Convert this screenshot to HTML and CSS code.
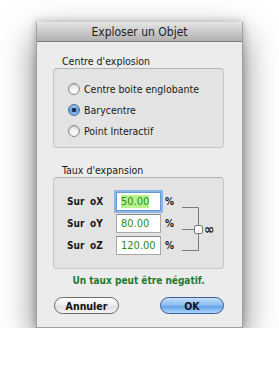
FILE: index.html
```html
<!DOCTYPE html>
<html lang="fr">
<head>
    <meta charset="UTF-8">
    <title>Exploser un Objet</title>
    <link rel="stylesheet" href="styles.css">
</head>
<body>
    <div class="window">
        <header class="titlebar">Exploser un Objet</header>
        <div class="content">
            <p class="group-label">Centre d'explosion</p>
            <div class="group group-radio">
                <label class="radio-row"><span class="radio"></span>Centre boite englobante</label>
                <label class="radio-row"><span class="radio radio-on"></span>Barycentre</label>
                <label class="radio-row"><span class="radio"></span>Point Interactif</label>
            </div>

            <p class="group-label group-label-2">Taux d'expansion</p>
            <div class="group group-rate">
                <div class="rate-rows">
                    <div class="rate-row">
                        <span class="rate-sur">Sur</span><span class="rate-axis">oX</span>
                        <span class="rate-input rate-focus"><span class="rate-sel">50.00</span></span>
                        <span class="rate-pct">%</span>
                    </div>
                    <div class="rate-row">
                        <span class="rate-sur">Sur</span><span class="rate-axis">oY</span>
                        <span class="rate-input">80.00</span>
                        <span class="rate-pct">%</span>
                    </div>
                    <div class="rate-row">
                        <span class="rate-sur">Sur</span><span class="rate-axis">oZ</span>
                        <span class="rate-input">120.00</span>
                        <span class="rate-pct">%</span>
                    </div>
                </div>
                <div class="link">
                    <svg width="26" height="66" viewBox="0 0 26 66">
                        <path d="M0 11.5H16.5V54.5H0M0 33.5H12" fill="none" stroke="#7a7a7a" stroke-width="1"/>
                        <rect x="12.5" y="29.5" width="8" height="8" rx="1.5" fill="#fafafa" stroke="#7a7a7a"/>
                    </svg>
                    <span class="link-inf">∞</span>
                </div>
            </div>

            <p class="hint">Un taux peut être négatif.</p>

            <div class="buttons">
                <button class="btn btn-cancel">Annuler</button>
                <button class="btn btn-ok">OK</button>
            </div>
        </div>
    </div>
</body>
</html>
```

FILE: styles.css
```css
* {
    margin: 0;
    padding: 0;
    box-sizing: border-box;
}
body {
    background-color: #fff;
    font-family: "DejaVu Sans Condensed", "DejaVu Sans", sans-serif;
    font-size: 10px;
    color: #1a1a1a;
}
.window {
    margin: 22px 0 0 36px;
    width: 207px;
    background-color: #ececec;
    border: 1px solid #a0a0a0;
    border-top: none;
    box-shadow: 0 14px 32px rgba(0, 0, 0, 0.5), 0 0 8px rgba(0, 0, 0, 0.25);
}
.titlebar {
    height: 20px;
    line-height: 20px;
    text-align: center;
    font-size: 12px;
    color: #1e1e1e;
    background: linear-gradient(#e6e6e6, #b0b0b0);
    border-bottom: 1px solid #7e7e7e;
    border-radius: 4px 4px 0 0;
}
.content {
    padding: 12px 18px 13px 16px;
}
.group-label {
    height: 14px;
    line-height: 14px;
    padding-left: 9px;
    font-size: 10.5px;
}
.group-label-2 {
    margin-top: 15px;
}
.group {
    background-color: #e3e3e3;
    border: 1px solid #c6c6c6;
    border-top-color: #b4b4b4;
    border-radius: 4px;
}
.group-radio {
    height: 80px;
    padding: 9px 0 0 14px;
}
.radio-row {
    display: flex;
    align-items: center;
    height: 21px;
    font-size: 10.5px;
}
.radio {
    width: 12px;
    height: 12px;
    margin-right: 4px;
    border-radius: 50%;
    border: 1px solid #8c8c8c;
    background: radial-gradient(circle at 50% 70%, #fff, #d8d8d8);
    box-shadow: inset 0 1px 1px rgba(0, 0, 0, 0.15);
}
.radio-on {
    border-color: #4d6e9e;
    background: radial-gradient(circle, #1c2c44 0 2px, transparent 2.5px), linear-gradient(#a9d0f5, #5f9ee0 55%, #88c1f2);
}
.group-rate {
    display: flex;
    height: 92px;
    padding: 12px 0 0 13px;
}
.rate-row {
    display: flex;
    align-items: center;
    height: 22px;
    font-weight: bold;
}
.rate-sur {
    width: 23px;
}
.rate-axis {
    width: 26px;
}
.rate-input {
    width: 45px;
    height: 19px;
    line-height: 17px;
    padding-left: 4px;
    font-weight: normal;
    font-size: 11px;
    color: #2b8c1a;
    background-color: #fff;
    border: 1px solid #a8a8a8;
    border-top-color: #8a8a8a;
}
.rate-focus {
    border-color: #6b9ad6;
    box-shadow: 0 0 0 2px #8db5e6;
}
.rate-sel {
    background-color: #b8f28e;
}
.rate-pct {
    margin-left: 4px;
}
.link {
    display: flex;
    align-items: center;
    margin-left: 8px;
}
.link-inf {
    margin-left: -4px;
    font-size: 14px;
    font-weight: bold;
    color: #222;
}
.hint {
    margin-top: 5px;
    height: 14px;
    line-height: 14px;
    text-align: center;
    font-weight: bold;
    color: #1f7a2c;
}
.buttons {
    display: flex;
    justify-content: space-between;
    margin-top: 9px;
    padding: 0 0 0 1px;
}
.btn {
    height: 17px;
    border-radius: 9px;
    font-family: "DejaVu Sans Condensed", "DejaVu Sans", sans-serif;
    font-size: 10.5px;
    font-weight: bold;
    color: #111;
    border: 1px solid #6a6a6a;
}
.btn-cancel {
    width: 65px;
    background: linear-gradient(#fff, #ececec 50%, #dcdcdc 52%, #f4f4f4);
}
.btn-ok {
    width: 64px;
    border-color: #3d5c93;
    background: linear-gradient(#c4e0fb, #86baf0 50%, #5e9ee6 52%, #a9d6fa);
}
```
